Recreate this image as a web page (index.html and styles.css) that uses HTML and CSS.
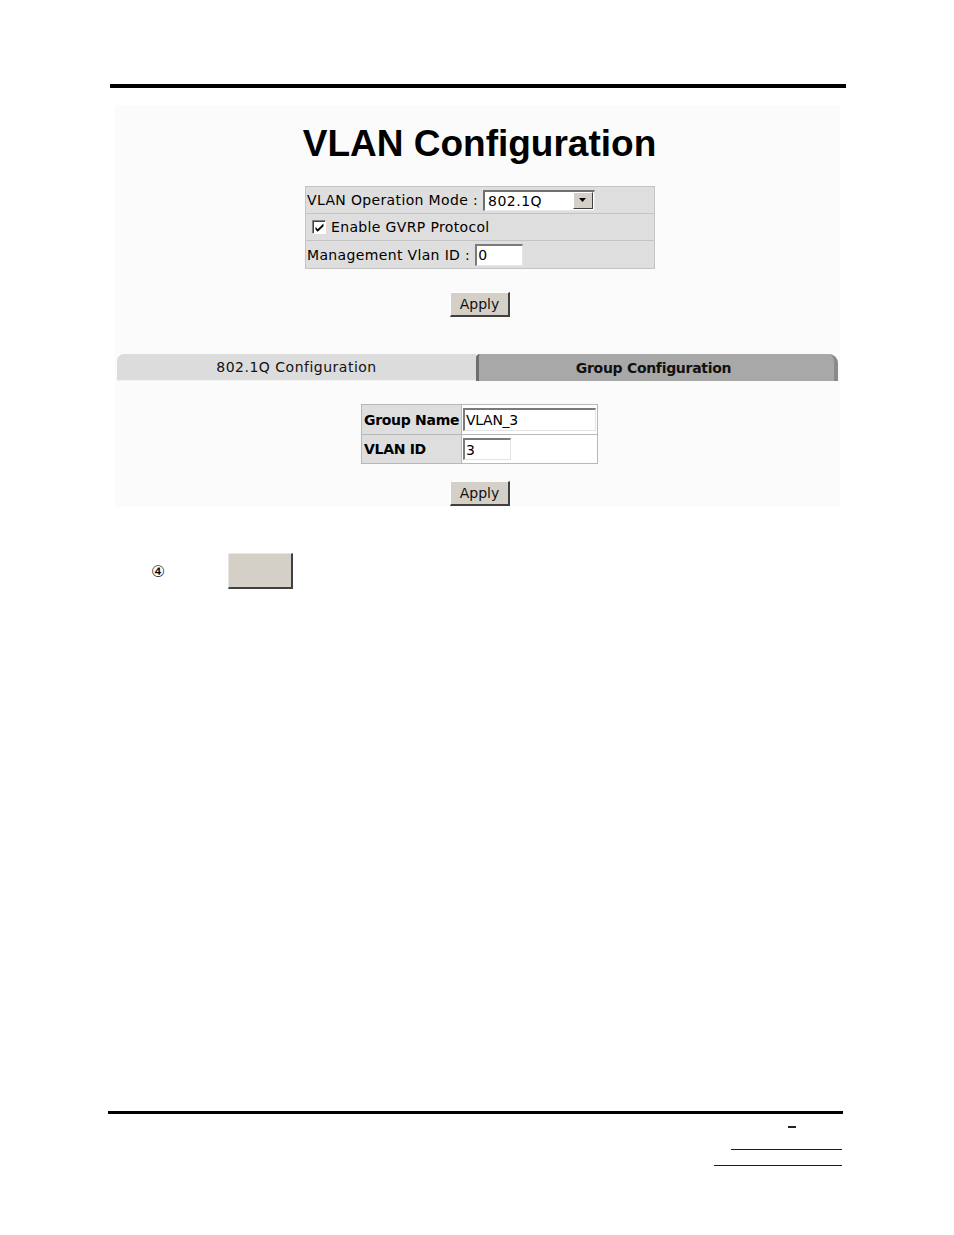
FILE: index.html
```html
<!DOCTYPE html>
<html lang="en">
<head>
<meta charset="utf-8">
<title>VLAN Configuration</title>
<link rel="stylesheet" href="styles.css">
</head>
<body>
<div class="page">
  <div class="rule-top"></div>

  <div class="shot">
    <h1 class="title">VLAN Configuration</h1>

    <div class="mode-table">
      <div class="mode-row r1">
        <span class="lbl">VLAN Operation Mode :</span>
        <span class="select">
          <span class="select-val">802.1Q</span>
          <span class="select-btn"><svg width="9" height="5" viewBox="0 0 9 5"><path d="M1 0h7L4.5 4z" fill="#000"/></svg></span>
        </span>
      </div>
      <div class="mode-row r2">
        <span class="check"><svg width="9" height="9" viewBox="0 0 9 9"><path d="M0.5 3.8l2.2 2.4L8.5 0.5V3.2L2.7 8.8 0.5 6.5z" fill="#000"/></svg></span>
        <span class="lbl">Enable GVRP Protocol</span>
      </div>
      <div class="mode-row r3">
        <span class="lbl">Management Vlan ID :</span>
        <span class="field f-mgmt">0</span>
      </div>
    </div>

    <div class="btn-wrap b1"><span class="apply">Apply</span></div>

    <div class="tabs">
      <div class="tab tab-left">802.1Q Configuration</div>
      <div class="tab tab-right">Group Configuration</div>
    </div>

    <div class="group-table">
      <div class="g-row g1">
        <span class="g-lbl">Group Name</span>
        <span class="g-val"><span class="field f-name">VLAN_3</span></span>
      </div>
      <div class="g-row g2">
        <span class="g-lbl">VLAN ID</span>
        <span class="g-val"><span class="field f-id">3</span></span>
      </div>
    </div>

    <div class="btn-wrap b2"><span class="apply">Apply</span></div>
  </div>

  <div class="note">
    <span class="num">④</span>
    <span class="gray-btn"></span>
  </div>

  <div class="footer">
    <div class="rule-bottom"></div>
    <div class="dash"></div>
    <div class="ulink l1"></div>
    <div class="ulink l2"></div>
  </div>
</div>
</body>
</html>
```

FILE: styles.css
```css
* { box-sizing: border-box; }
html, body { margin: 0; padding: 0; background: #fff; }
body { width: 954px; height: 1235px; overflow: hidden; font-family: "DejaVu Sans", Verdana, sans-serif; color: #000; }

.page { padding-top: 84px; }

.rule-top { margin-left: 110px; width: 736px; height: 4px; background: #000; }

.shot {
  margin: 17px 0 0 115px;
  width: 725px;
  background: #fbfbfb;
  padding-bottom: 1px;
  display: flex;
  flex-direction: column;
}

.title {
  margin: 20px 0 0 0;
  font-family: "Liberation Sans", Arial, sans-serif;
  font-weight: bold;
  font-size: 37px;
  line-height: 37px;
  text-align: center;
  padding-left: 4px;
  letter-spacing: 0;
}

.mode-table {
  margin: 24px 0 0 190px;
  width: 350px;
  border: 1px solid #c4c4c4;
  background: #dedede;
}
.mode-row {
  display: flex;
  align-items: center;
  border-top: 1px solid #c4c4c4;
  font-size: 14px;
  padding-left: 1px;
}
.mode-row.r1 { border-top: 0; height: 26px; }
.mode-row.r2 { height: 27px; padding-left: 6px; }
.mode-row.r3 { height: 28px; }
.lbl { white-space: nowrap; letter-spacing: 0.35px; }

.select {
  margin-left: 5px;
  width: 112px;
  height: 21px;
  background: #fff;
  border-top: 2px solid #6f6f6f;
  border-left: 2px solid #6f6f6f;
  border-right: 1px solid #e8e8e8;
  border-bottom: 1px solid #e8e8e8;
  display: flex;
  align-items: center;
}
.select-val { flex: 1; padding-left: 3px; font-size: 14px; letter-spacing: 0.5px; }
.select-btn {
  width: 20px;
  height: 17px;
  margin-right: 1px;
  background: #d4d0c8;
  border-top: 1px solid #fff;
  border-left: 1px solid #fff;
  border-right: 1px solid #404040;
  border-bottom: 1px solid #404040;
  display: flex;
  align-items: center;
  justify-content: center;
}

.check {
  width: 14px;
  height: 14px;
  background: #fff;
  border-top: 1px solid #808080;
  border-left: 1px solid #808080;
  border-right: 1px solid #fff;
  border-bottom: 1px solid #fff;
  box-shadow: inset 1px 1px 0 #404040;
  display: flex;
  align-items: center;
  justify-content: center;
  margin-right: 5px;
  padding: 1px 0 0 1px;
}

.field {
  display: inline-flex;
  align-items: center;
  background: #fff;
  border-top: 2px solid #7a7a7a;
  border-left: 2px solid #7a7a7a;
  border-right: 1px solid #e4e4e4;
  border-bottom: 1px solid #e4e4e4;
  font-size: 14px;
  padding-left: 1px;
  line-height: 1;
  letter-spacing: 0.3px;
}
.f-mgmt { margin-left: 5px; width: 48px; height: 22px; }
.f-name { width: 133px; height: 23px; letter-spacing: -0.3px; }
.f-id { width: 48px; height: 22px; }

.btn-wrap { display: flex; justify-content: center; padding-left: 5px; }
.btn-wrap.b1 { margin-top: 23px; }
.btn-wrap.b2 { margin-top: 17px; }
.apply {
  width: 60px;
  height: 25px;
  background: #d4d0c8;
  border-top: 1px solid #fff;
  border-left: 1px solid #fff;
  border-right: 2px solid #404040;
  border-bottom: 2px solid #404040;
  display: flex;
  align-items: center;
  justify-content: center;
  font-size: 14px;
  color: #111;
}

.tabs {
  margin: 37px 0 0 2px;
  width: 721px;
  height: 27px;
  display: flex;
}
.tab {
  height: 27px;
  display: flex;
  align-items: center;
  justify-content: center;
  font-size: 14px;
  white-space: nowrap;
}
.tab-left {
  width: 359px;
  background: #dcdcdc;
  border-top-left-radius: 7px;
  border-bottom: 1px solid #f2f2f2;
  color: #111;
  letter-spacing: 0.5px;
}
.tab-right {
  flex: 1;
  background: #a8a8a8;
  border-top-right-radius: 9px;
  border-top-left-radius: 4px;
  border-left: 3px solid #6e6e6e;
  border-right: 4px solid #8a8a8a;
  font-weight: bold;
  color: #111;
  letter-spacing: -0.3px;
  padding-right: 6px;
}

.group-table {
  margin: 23px 0 0 246px;
  width: 237px;
  border: 1px solid #b8b8b8;
  background: #fff;
}
.g-row { display: flex; }
.g-row.g1 { height: 29px; }
.g-row.g2 { height: 29px; border-top: 1px solid #b8b8b8; }
.g-lbl {
  width: 100px;
  background: #dedede;
  border-right: 1px solid #b8b8b8;
  font-weight: bold;
  font-size: 14px;
  display: flex;
  align-items: center;
  padding-left: 2px;
  letter-spacing: -0.3px;
  white-space: nowrap;
}
.g-val { flex: 1; display: flex; align-items: center; padding-left: 1px; }

.note {
  margin-top: 46px;
  display: flex;
  align-items: center;
  padding-left: 151px;
  height: 35px;
}
.num { font-size: 16px; width: 77px; line-height: 1; padding-top: 2px; }
.gray-btn {
  width: 65px;
  height: 36px;
  background: #d4d0c8;
  border-top: 1px solid #e8e6e2;
  border-left: 1px solid #e8e6e2;
  border-right: 2px solid #404040;
  border-bottom: 2px solid #404040;
}

.footer { margin-top: 523px; }
.rule-bottom { margin-left: 108px; width: 735px; height: 3px; background: #000; }
.dash { margin: 12px 0 0 788px; width: 8px; height: 2px; background: #222; }
.ulink { height: 1px; background: #0000ff; }
.ulink.l1 { margin: 21px 0 0 731px; width: 111px; }
.ulink.l2 { margin: 15px 0 0 714px; width: 128px; }
```
